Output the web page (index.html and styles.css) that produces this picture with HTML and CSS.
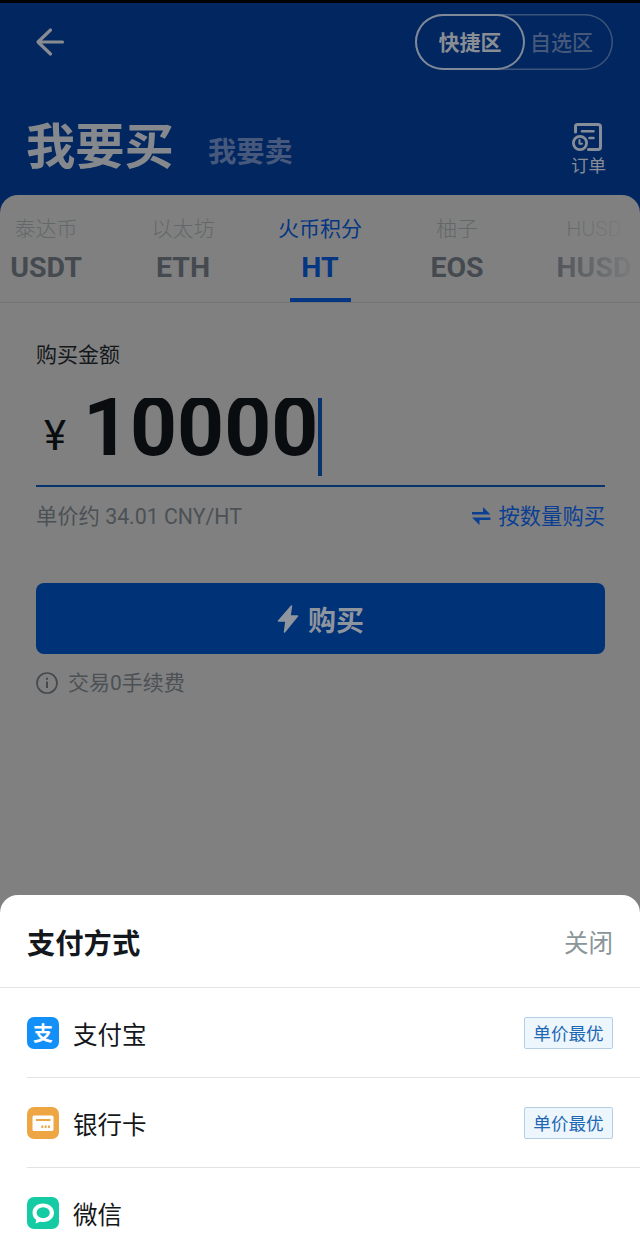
FILE: index.html
```html
<!DOCTYPE html>
<html lang="zh-CN">
<head>
  <meta charset="UTF-8">
  <title>我要买</title>
  <meta name="viewport" content="width=device-width, initial-scale=1.0">
  <link rel="stylesheet" href="styles.css">
</head>
<body>
  <div class="app">
    <header class="header">
      <div class="top-bar">
        <svg class="back" width="30" height="30" viewBox="0 0 30 30">
          <path d="M15.500 3 L3 15 L15.500 27 M3.500 15 H27.500" fill="none" stroke="#888c92" stroke-width="3.200" stroke-linecap="round" stroke-linejoin="round"/>
        </svg>
        <div class="zone-switch">
          <span class="zone active">快捷区</span>
          <span class="zone">自选区</span>
        </div>
      </div>
      <div class="title-bar">
        <h1>我要买</h1>
        <h2>我要卖</h2>
        <div class="orders">
          <svg width="32" height="30" viewBox="0 0 32 30" fill="none" stroke="#888e98" stroke-linecap="round" stroke-linejoin="round">
            <path d="M4.500 10 V4.500 Q4.500 2.500 6.500 2.500 H27 Q29.500 2.500 29.500 5 V25 Q29.500 27.500 27 27.500 H17.500" stroke-width="3"/>
            <path d="M11 9.300 H22.500 M18.500 16 H22.500" stroke-width="2.600"/>
            <circle cx="9" cy="21" r="6.600" stroke-width="2.800"/>
            <path d="M8.500 18 V21.700 H11" stroke-width="2"/>
          </svg>
          <span>订单</span>
        </div>
      </div>
    </header>

    <main class="card">
      <nav class="tabs">
        <div class="tab"><small>泰达币</small><b>USDT</b></div>
        <div class="tab"><small>以太坊</small><b>ETH</b></div>
        <div class="tab active"><small>火币积分</small><b>HT</b></div>
        <div class="tab"><small>柚子</small><b>EOS</b></div>
        <div class="tab fade"><small>HUSD</small><b>HUSD</b></div>
      </nav>

      <section class="form">
        <div class="label">购买金额</div>
        <div class="amount">
          <span class="currency">¥</span>
          <span class="value">10000</span>
          <span class="cursor"></span>
        </div>
        <div class="price-row">
          <span>单价约 34.01 CNY/HT</span>
          <a class="by-count">
            <svg width="20" height="20" viewBox="0 0 20 20" fill="#0b3f92">
              <path d="M1 6 H12 V1 L19.500 8.500 H1 Z"/>
              <path d="M19.500 14 H8.500 V19 L1 11.500 H19.500 Z"/>
            </svg>
            按数量购买
          </a>
        </div>
        <button class="buy">
          <svg width="22" height="30" viewBox="0 0 22 30">
            <path d="M14.500 2 L1.500 17 H9 L7.500 28 L20.500 12 H13 Z" fill="#8f959e" stroke="#8f959e" stroke-width="1.500" stroke-linejoin="round"/>
          </svg>
          购买
        </button>
        <div class="note">
          <svg width="22" height="22" viewBox="0 0 22 22" fill="none" stroke="#44494d">
            <circle cx="11" cy="11" r="10" stroke-width="1.700"/>
            <path d="M11 9.500 V16 M11 5.700 V7.700" stroke-width="2"/>
          </svg>
          <span>交易0手续费</span>
        </div>
      </section>
    </main>

    <div class="sheet-wrap">
      <section class="sheet">
        <div class="sheet-head">
          <h3>支付方式</h3>
          <span class="close">关闭</span>
        </div>
        <ul class="methods">
          <li>
            <span class="icon alipay">支</span>
            <span class="name">支付宝</span>
            <span class="badge">单价最优</span>
          </li>
          <li>
            <span class="icon bank">
              <svg width="32" height="32" viewBox="0 0 32 32">
                <rect x="5.500" y="8.500" width="21" height="15.500" rx="1.500" fill="#fff"/>
                <path d="M9 13 H23.500" stroke="#eea544" stroke-width="1.800"/>
                <path d="M15 21 L15.700 18.500 M18.300 21 L19 18.500 M21.600 21 L22.300 18.500" stroke="#eea544" stroke-width="1.900"/>
              </svg>
            </span>
            <span class="name">银行卡</span>
            <span class="badge">单价最优</span>
          </li>
          <li>
            <span class="icon wechat">
              <svg width="32" height="32" viewBox="0 0 32 32">
                <path d="M16 6.500 C9.800 6.500 5.500 10.500 5.500 15.800 C5.500 19 7 21.400 9.200 23 L8.500 26.500 L13 24.700 C20.500 26.400 27 22 27 15.800 C27 10.500 22.200 6.500 16 6.500 Z" fill="#fff"/>
                <ellipse cx="16.200" cy="15.700" rx="6.600" ry="5.500" fill="#14cba4"/>
              </svg>
            </span>
            <span class="name">微信</span>
          </li>
        </ul>
      </section>
    </div>
  </div>
</body>
</html>
```

FILE: styles.css
```css
* {
  box-sizing: border-box;
  margin: 0;
  padding: 0;
}

body {
  background-color: #022660;
  font-family: Roboto, "Noto Sans CJK SC", sans-serif;
  font-size: 21px;
}

svg {
  display: block;
  flex: none;
}

.app {
  height: 1257px;
  display: flex;
  flex-direction: column;
  overflow: hidden;
}

/* Header */
.header {
  height: 195px;
  border-top: 3px solid #000;
  flex: none;
}

.top-bar {
  display: flex;
  justify-content: space-between;
  align-items: center;
  height: 56px;
  margin: 11px 27px 0 35px;
}

.zone-switch {
  display: flex;
  width: 198px;
  height: 56px;
  border-radius: 28px;
  box-shadow: inset 0 0 0 1.5px #3d5479;
  line-height: 58px;
}

.zone {
  color: #47597a;
  padding-left: 5px;
  font-weight: 500;
}

.zone.active {
  width: 110px;
  padding: 0;
  border-radius: 28px;
  box-shadow: inset 0 0 0 2px #808997;
  color: #898e95;
  text-align: center;
  font-weight: bold;
}

.title-bar {
  display: flex;
  margin: 40px 34px 0 26px;
  height: 70px;
}

.title-bar h1 {
  font-size: 49.300px;
  line-height: 74px;
  color: #85888c;
}

.title-bar h2 {
  font-size: 28.300px;
  line-height: 86px;
  margin-left: 34px;
  color: #46597c;
}

.orders {
  display: flex;
  flex-direction: column;
  align-items: center;
  margin: 12px 0 0 auto;
  font-size: 17.5px;
  line-height: 28px;
  color: #878d97;
}

.orders svg {
  margin-right: 3px;
}

/* Coin tabs */
.card {
  height: 700px;
  flex: none;
  background-color: #808080;
  border-radius: 18px 18px 0 0;
}

.tabs {
  display: flex;
  justify-content: center;
  height: 108px;
  border-bottom: 1px solid #747474;
  overflow: hidden;
}

.tab {
  flex: 0 0 137px;
  display: flex;
  flex-direction: column;
  align-items: center;
  padding-top: 19px;
  color: #444a50;
}

.tab small {
  font-size: 21px;
  line-height: 30px;
  height: 30px;
  font-weight: 300;
  color: #626869;
}

.tab b {
  font-size: 28.500px;
  line-height: 34px;
  margin-top: 7px;
}

.tab.active,
.tab.active small {
  color: #053683;
  font-weight: 400;
}

.tab.active::after {
  content: "";
  width: 61px;
  height: 4px;
  margin-top: 13px;
  background-color: #053683;
}

.tab.fade small,
.tab.fade b {
  background: linear-gradient(to right, #50565b, #7a7b7c);
  background-clip: text;
  -webkit-background-clip: text;
  color: transparent;
}

.tab.fade small {
  background-image: linear-gradient(to right, #65696b, #7a7b7b);
}

/* Form */
.form {
  padding: 37px 35px 0 36px;
}

.label {
  height: 30px;
  line-height: 30px;
  color: #15181b;
}

.amount {
  display: flex;
  height: 89px;
  margin-top: 28px;
  border-bottom: 2px solid #07346f;
  overflow: hidden;
  color: #0a0d10;
}

.currency {
  width: 47px;
  padding-left: 8px;
  font-size: 42px;
  line-height: 76px;
}

.value {
  font-size: 82px;
  font-weight: bold;
  line-height: 59px;
}

.cursor {
  width: 4px;
  height: 78px;
  background-color: #07346f;
}

.price-row {
  display: flex;
  justify-content: space-between;
  height: 30px;
  line-height: 30px;
  margin-top: 15px;
  color: #4b5155;
  font-size: 21.300px;
}

.by-count {
  display: flex;
  align-items: center;
  gap: 8px;
  color: #0b3f92;
}

.by-count svg {
  margin-bottom: 3px;
}

.buy {
  display: flex;
  justify-content: center;
  align-items: center;
  gap: 9px;
  width: 100%;
  height: 71px;
  margin-top: 51px;
  border: none;
  border-radius: 8px;
  background-color: #003278;
  color: #8f959e;
  font-family: inherit;
  font-size: 28px;
  font-weight: bold;
}

.note {
  display: flex;
  align-items: center;
  gap: 10px;
  height: 30px;
  margin-top: 14px;
  line-height: 32px;
  color: #4b5155;
}

/* Payment sheet */
.sheet-wrap {
  flex: 1;
  background-color: #808080;
}

.sheet {
  height: 100%;
  background-color: #fff;
  border-radius: 18px 18px 0 0;
}

.sheet-head {
  display: flex;
  justify-content: space-between;
  align-items: center;
  height: 93px;
  padding: 0 27px;
  border-bottom: 1px solid #e2e3e4;
}

.sheet-head h3 {
  font-size: 28.300px;
  color: #14181c;
}

.close {
  font-size: 24.500px;
  color: #8a9599;
}

.methods {
  list-style: none;
  margin-left: 27px;
}

.methods li {
  display: flex;
  align-items: center;
  height: 90px;
  padding-right: 27px;
  border-bottom: 1px solid #e2e3e4;
}

.methods li:last-child {
  border-bottom: none;
}

.icon {
  width: 32px;
  height: 32px;
  border-radius: 7px;
  overflow: hidden;
}

.alipay {
  background-color: #1290f8;
  color: #fff;
  font-size: 20px;
  font-weight: bold;
  line-height: 34px;
  text-align: center;
}

.bank {
  background-color: #eea544;
}

.wechat {
  background-color: #14cba4;
}

.name {
  margin-left: 14px;
  padding-top: 1px;
  font-size: 24.500px;
  color: #14171a;
}

.badge {
  width: 89px;
  height: 32px;
  margin-left: auto;
  border: 1px solid #b5d0e6;
  border-radius: 2px;
  background-color: #edf5fd;
  color: #1d68b3;
  font-size: 17.600px;
  line-height: 32px;
  text-align: center;
}
```
